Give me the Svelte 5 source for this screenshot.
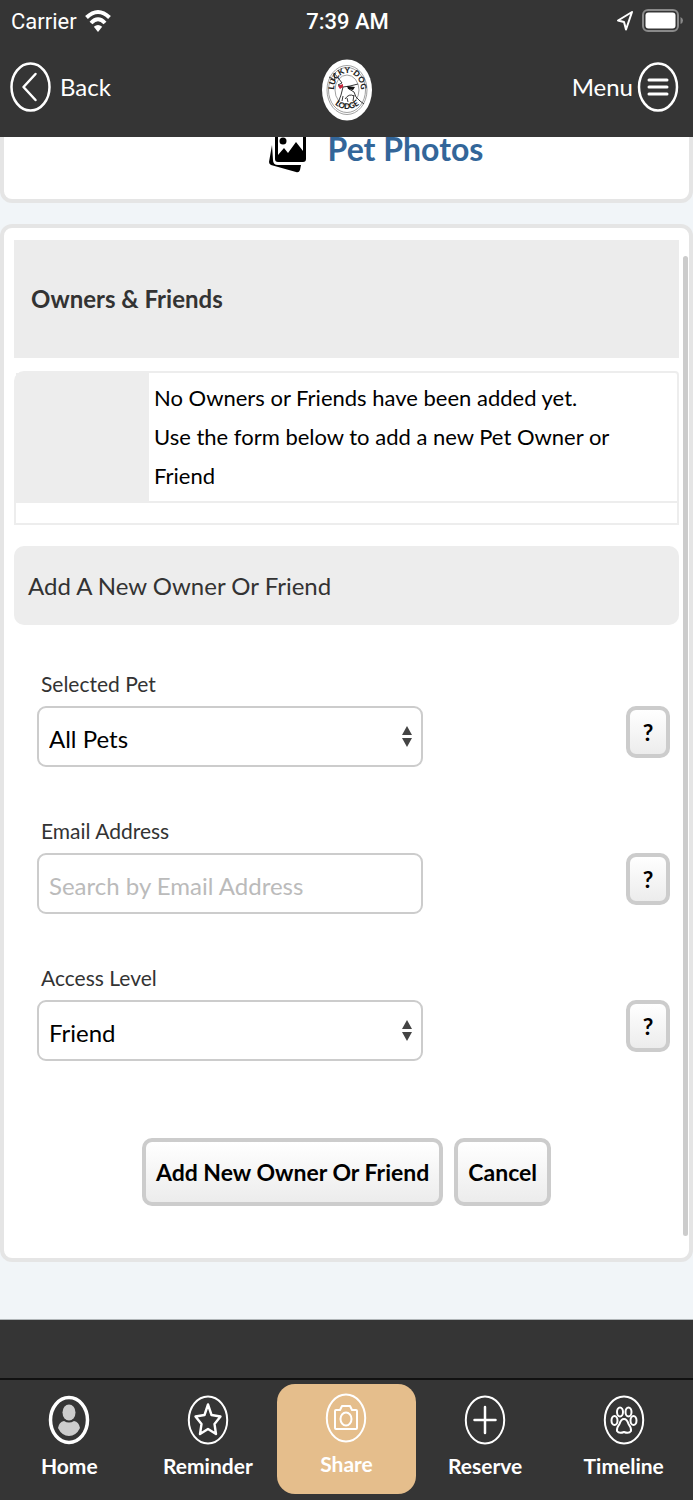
<script lang="ts">
  let selectedPet = 'all';
  let email = '';
  let accessLevel = 'friend';
  let activeTab = 'Share';

  const tabs = ['Home', 'Reminder', 'Share', 'Reserve', 'Timeline'];
</script>

<div class="app">
  <header class="top">
    <div class="status">
      <div class="carrier">
        <span>Carrier</span>
        <svg width="26" height="24" viewBox="0 0 26 24" fill="none" stroke="#fff" stroke-width="4">
          <path d="M1.5 8.5Q13 -2.5 24.500 8.500" />
          <path d="M6 14Q13 6.500 20 14" />
          <path d="M13 23L8.800 17.800Q13 14 17.200 17.800Z" fill="#fff" stroke="none" />
        </svg>
      </div>
      <span class="time">7:39 AM</span>
      <div class="battery">
        <svg width="18" height="22" viewBox="0 0 18 22" fill="none" stroke="#fff" stroke-width="2" stroke-linejoin="round">
          <path d="M16 2L2 10.500L8 12L10 19.500Z" />
        </svg>
        <svg width="42" height="24" viewBox="0 0 42 24">
          <rect x="1" y="1" width="35" height="21" rx="5" fill="none" stroke="#8a8a8a" stroke-width="2" />
          <rect x="3.500" y="3.500" width="30" height="16" rx="3" fill="#fff" />
          <path d="M38.500 8Q41 9 41 11.500Q41 14 38.500 15Z" fill="#8a8a8a" />
        </svg>
      </div>
    </div>

    <nav class="bar">
      <button class="bar-btn" type="button">
        <svg width="42" height="50" viewBox="0 0 42 50" fill="none" stroke="#fff" stroke-width="2.500">
          <ellipse cx="20.500" cy="25" rx="19" ry="23.500" />
          <path d="M25.500 12L13.500 25L25.500 38" stroke-linecap="round" stroke-linejoin="round" />
        </svg>
        Back
      </button>

      <svg class="logo" width="52" height="62" viewBox="0 0 52 62" role="img" aria-label="Lucky-Dog Lodge">
        <defs>
          <path id="arc-top" d="M13 31A13.500 17 0 0 1 40 31" />
          <path id="arc-bottom" d="M11 43Q26 57 41 43" />
        </defs>
        <ellipse cx="26" cy="31" rx="25" ry="30.500" fill="#fff" />
        <g fill="none" stroke="#777" stroke-width="0.700">
          <ellipse cx="26" cy="31" rx="20" ry="24.500" />
          <ellipse cx="26" cy="31" rx="18.500" ry="22.500" />
          <ellipse cx="26" cy="31" rx="12" ry="15" />
        </g>
        <g fill="none" stroke="#222" stroke-width="0.900">
          <path d="M8 18L14 21L13 14L18 20L21 24L17 26L22 28L20 36L17 44" />
          <path d="M22 28L29 27L37 25M28 30L33 33L35 38L39 42L43 45" />
          <path d="M22 37L21 42M26 39L27 43M33 36L32 42M24 40Q28 34 33 37" />
        </g>
        <path d="M26 27L34 28L32 31L27 30Z" fill="#111" />
        <path d="M17 27L22 25L22 28L19 30Z" fill="#c8253c" />
        <text class="logo-text"><textPath href="#arc-top" startOffset="50%" text-anchor="middle">LUCKY-DOG</textPath></text>
        <text class="logo-text"><textPath href="#arc-bottom" startOffset="50%" text-anchor="middle">LODGE</textPath></text>
      </svg>

      <button class="bar-btn menu" type="button">
        Menu
        <svg width="42" height="50" viewBox="0 0 42 50" fill="none" stroke="#fff" stroke-width="2.500">
          <ellipse cx="21" cy="25" rx="19" ry="23.500" />
          <path d="M12 18H30M12 25H30M12 32H30" stroke-width="3" stroke-linecap="round" />
        </svg>
      </button>
    </nav>
  </header>

  <main>
    <section class="card photos">
      <a href="#photos">
        <svg width="40" height="48" viewBox="0 0 40 48">
          <path d="M4 20L1 37Q1 39 3 40L28 47Q31 48 32 45L33 40H10Q5 40 5 35Z" />
          <path fill-rule="evenodd" d="M9 4H35Q38 4 38 7V34Q38 37 35 37H10Q7 37 7 34V7Q7 4 9 4ZM10 30L16 23L20 28L28 17L35 26V7H10Z" />
          <circle cx="15" cy="16" r="3.500" />
        </svg>
        Pet Photos
      </a>
    </section>

    <section class="card owners">
      <h2>Owners &amp; Friends</h2>

      <div class="empty">
        <div class="thumb"></div>
        <p>No Owners or Friends have been added yet.<br />Use the form below to add a new Pet Owner or Friend</p>
        <div class="empty-foot"></div>
      </div>

      <h3>Add A New Owner Or Friend</h3>

      <form on:submit|preventDefault>
        <div class="field">
          <label for="pet">Selected Pet</label>
          <div class="row">
            <div class="control">
              <select id="pet" bind:value={selectedPet}>
                <option value="all">All Pets</option>
              </select>
              <svg class="arrows" width="10" height="22" viewBox="0 0 10 22"><path d="M5 0L10 9H0ZM0 12H10L5 21Z" /></svg>
            </div>
            <button class="btn help" type="button">?</button>
          </div>
        </div>

        <div class="field">
          <label for="email">Email Address</label>
          <div class="row">
            <div class="control">
              <input id="email" type="email" placeholder="Search by Email Address" bind:value={email} />
            </div>
            <button class="btn help" type="button">?</button>
          </div>
        </div>

        <div class="field">
          <label for="access">Access Level</label>
          <div class="row">
            <div class="control">
              <select id="access" bind:value={accessLevel}>
                <option value="friend">Friend</option>
                <option value="owner">Owner</option>
              </select>
              <svg class="arrows" width="10" height="22" viewBox="0 0 10 22"><path d="M5 0L10 9H0ZM0 12H10L5 21Z" /></svg>
            </div>
            <button class="btn help" type="button">?</button>
          </div>
        </div>

        <div class="actions">
          <button class="btn" type="submit">Add New Owner Or Friend</button>
          <button class="btn" type="button">Cancel</button>
        </div>
      </form>

      <div class="scroll-thumb"></div>
    </section>
  </main>

  <div class="spacer"></div>

  <nav class="tabs">
    {#each tabs as tab}
      <button type="button" class:active={tab === activeTab} on:click={() => (activeTab = tab)}>
        <svg width="42" height="50" viewBox="0 0 42 50" fill="none" stroke="#fff" stroke-width="2" stroke-linejoin="round">
          {#if tab === 'Home'}
            <ellipse cx="21" cy="25" rx="18.500" ry="22.500" stroke-width="3.500" />
            <ellipse cx="21" cy="17.500" rx="6.500" ry="8" fill="#ccc" stroke="none" />
            <path d="M10 33Q11 27 16 26Q21 29 26 26Q31 27 32 33Q28 41 21 41Q14 41 10 33Z" fill="#ccc" stroke="none" />
          {:else}
            <ellipse cx="21" cy="25" rx="19.200" ry="23.500" />
          {/if}
          {#if tab === 'Reminder'}
            <path d="M21 9.500L24.500 20L33.500 21.500L27.500 29L29 39L21 34L13 39L14.500 29L8.500 21.500L17.500 20Z" stroke-width="2.400" />
          {:else if tab === 'Share'}
            <path d="M11 17H15L17 13H25L27 17H31Q32 17 32 18V35Q32 36 31 36H11Q10 36 10 35V18Q10 17 11 17Z" />
            <ellipse cx="21" cy="26" rx="5.500" ry="6.500" />
          {:else if tab === 'Reserve'}
            <path d="M21 12V38M10.500 25H31.500" stroke-width="2.500" stroke-linecap="round" />
          {:else if tab === 'Timeline'}
            <ellipse cx="17" cy="17" rx="3" ry="4.500" />
            <ellipse cx="25.500" cy="17" rx="3" ry="4.500" />
            <ellipse cx="11.500" cy="25.500" rx="3" ry="4.500" />
            <ellipse cx="30.500" cy="25.500" rx="3" ry="4.500" />
            <path d="M21 24Q24 24 25.500 29Q28.500 33 28 36Q26 39 21 37Q16 39 14 36Q13.500 33 16.500 29Q18 24 21 24Z" />
          {/if}
        </svg>
        {tab}
      </button>
    {/each}
  </nav>
</div>

<style>
  :global(body) {
    margin: 0;
    background: #353535;
  }

  * {
    box-sizing: border-box;
  }

  .app {
    font-family: Lato, 'Open Sans', sans-serif;
    color: #333;
  }

  button,
  input,
  select {
    font-family: inherit;
  }

  svg {
    display: block;
    flex: none;
  }

  .top {
    position: relative;
    z-index: 1;
    background: #353535;
    color: #fff;
  }

  .status {
    display: grid;
    grid-template-columns: 1fr auto 1fr;
    align-items: center;
    height: 42px;
    padding: 0 9px 0 11px;
    font-family: Roboto, sans-serif;
    font-size: 22px;
  }

  .carrier,
  .battery {
    display: flex;
    align-items: center;
    gap: 8px;
  }

  .battery {
    justify-content: flex-end;
  }

  .time {
    font-weight: 500;
  }

  .bar {
    display: grid;
    grid-template-columns: 1fr auto 1fr;
    align-items: center;
    height: 95px;
    padding: 0 10px;
  }

  .bar-btn {
    display: flex;
    align-items: center;
    gap: 8px;
    padding: 0 0 6px;
    border: 0;
    background: none;
    color: #fff;
    font-size: 24px;
  }

  .menu {
    justify-self: end;
    gap: 4px;
    padding-right: 4px;
  }

  .logo-text {
    font-size: 8px;
    font-weight: 900;
    fill: #222;
  }

  main {
    display: flex;
    flex-direction: column;
    gap: 21px;
    padding-bottom: 57px;
    background: #f1f5f8;
  }

  .card {
    position: relative;
    background: #fff;
    border: 4px solid #e5e5e5;
    border-radius: 12px;
  }

  .photos {
    margin-top: -20px;
    padding-bottom: 22px;
  }

  .photos a {
    display: flex;
    justify-content: center;
    align-items: center;
    gap: 20px;
    padding-left: 58px;
    color: #336699;
    font-size: 32px;
    font-weight: 700;
    line-height: 56px;
    text-decoration: none;
  }

  .owners {
    padding: 12px 10px 52px;
  }

  h2 {
    margin: 0 0 13px;
    padding: 0 17px;
    background: #ececec;
    font-size: 24px;
    font-weight: 700;
    line-height: 118px;
  }

  .empty {
    display: grid;
    grid-template-columns: 133px 1fr;
    margin-bottom: 21px;
    border: 2px solid #ededed;
    border-radius: 10px 4px 0 0;
    color: #000;
  }

  .thumb {
    background: #ededed;
  }

  .empty p {
    margin: 0;
    padding: 5px 5px 6px;
    font-size: 22px;
    line-height: 39px;
  }

  .empty-foot {
    grid-column: 1 / -1;
    height: 22px;
    border-top: 2px solid #ededed;
  }

  h3 {
    margin: 0 0 44px;
    padding: 0 14px;
    background: #ededed;
    border-radius: 10px;
    font-size: 24px;
    font-weight: 400;
    line-height: 79px;
  }

  form {
    padding: 0 9px 0 23px;
  }

  .field {
    margin-bottom: 25px;
  }

  label {
    display: block;
    padding-left: 4px;
    font-size: 21px;
    line-height: 30px;
    margin-bottom: 7px;
  }

  .row {
    display: flex;
    justify-content: space-between;
    align-items: flex-start;
    min-height: 85px;
  }

  .control {
    position: relative;
    width: 61%;
  }

  input,
  select {
    display: block;
    width: 100%;
    height: 61px;
    padding: 4px 10px 0;
    appearance: none;
    background: #fff;
    border: 2px solid #ccc;
    border-radius: 9px;
    color: #000;
    font-size: 24px;
  }

  input::placeholder {
    color: #bbb;
  }

  .arrows {
    position: absolute;
    right: 11px;
    top: 20px;
    fill: #444;
    pointer-events: none;
  }

  .btn {
    height: 68px;
    padding: 0 10px;
    background: linear-gradient(#fff, #ececec);
    border: 4px solid #ccc;
    border-radius: 10px;
    color: #000;
    font-size: 23px;
    font-weight: 700;
  }

  .help {
    width: 44px;
    height: 52px;
    padding: 0;
  }

  .actions {
    display: flex;
    justify-content: center;
    gap: 11px;
    padding-right: 14px;
    margin-top: 53px;
  }

  .scroll-thumb {
    position: absolute;
    top: 28px;
    right: 1px;
    bottom: 22px;
    width: 5px;
    border-radius: 3px;
    background: #ccc;
  }

  .spacer {
    height: 59px;
    border-top: 1px solid #b0b5b8;
    background: #353535;
  }

  .tabs {
    display: grid;
    grid-template-columns: repeat(5, 1fr);
    border-top: 2px solid #111;
    padding: 4px 0 6px;
    background: #353535;
  }

  .tabs button {
    display: flex;
    flex-direction: column;
    align-items: center;
    gap: 5px;
    height: 110px;
    padding: 11px 0 0;
    border: 0;
    border-radius: 18px;
    background: none;
    color: #fff;
    font-size: 21px;
    font-weight: 700;
    line-height: 32px;
  }

  .tabs .active {
    padding-top: 9px;
    background: #e5be8c;
  }
</style>
